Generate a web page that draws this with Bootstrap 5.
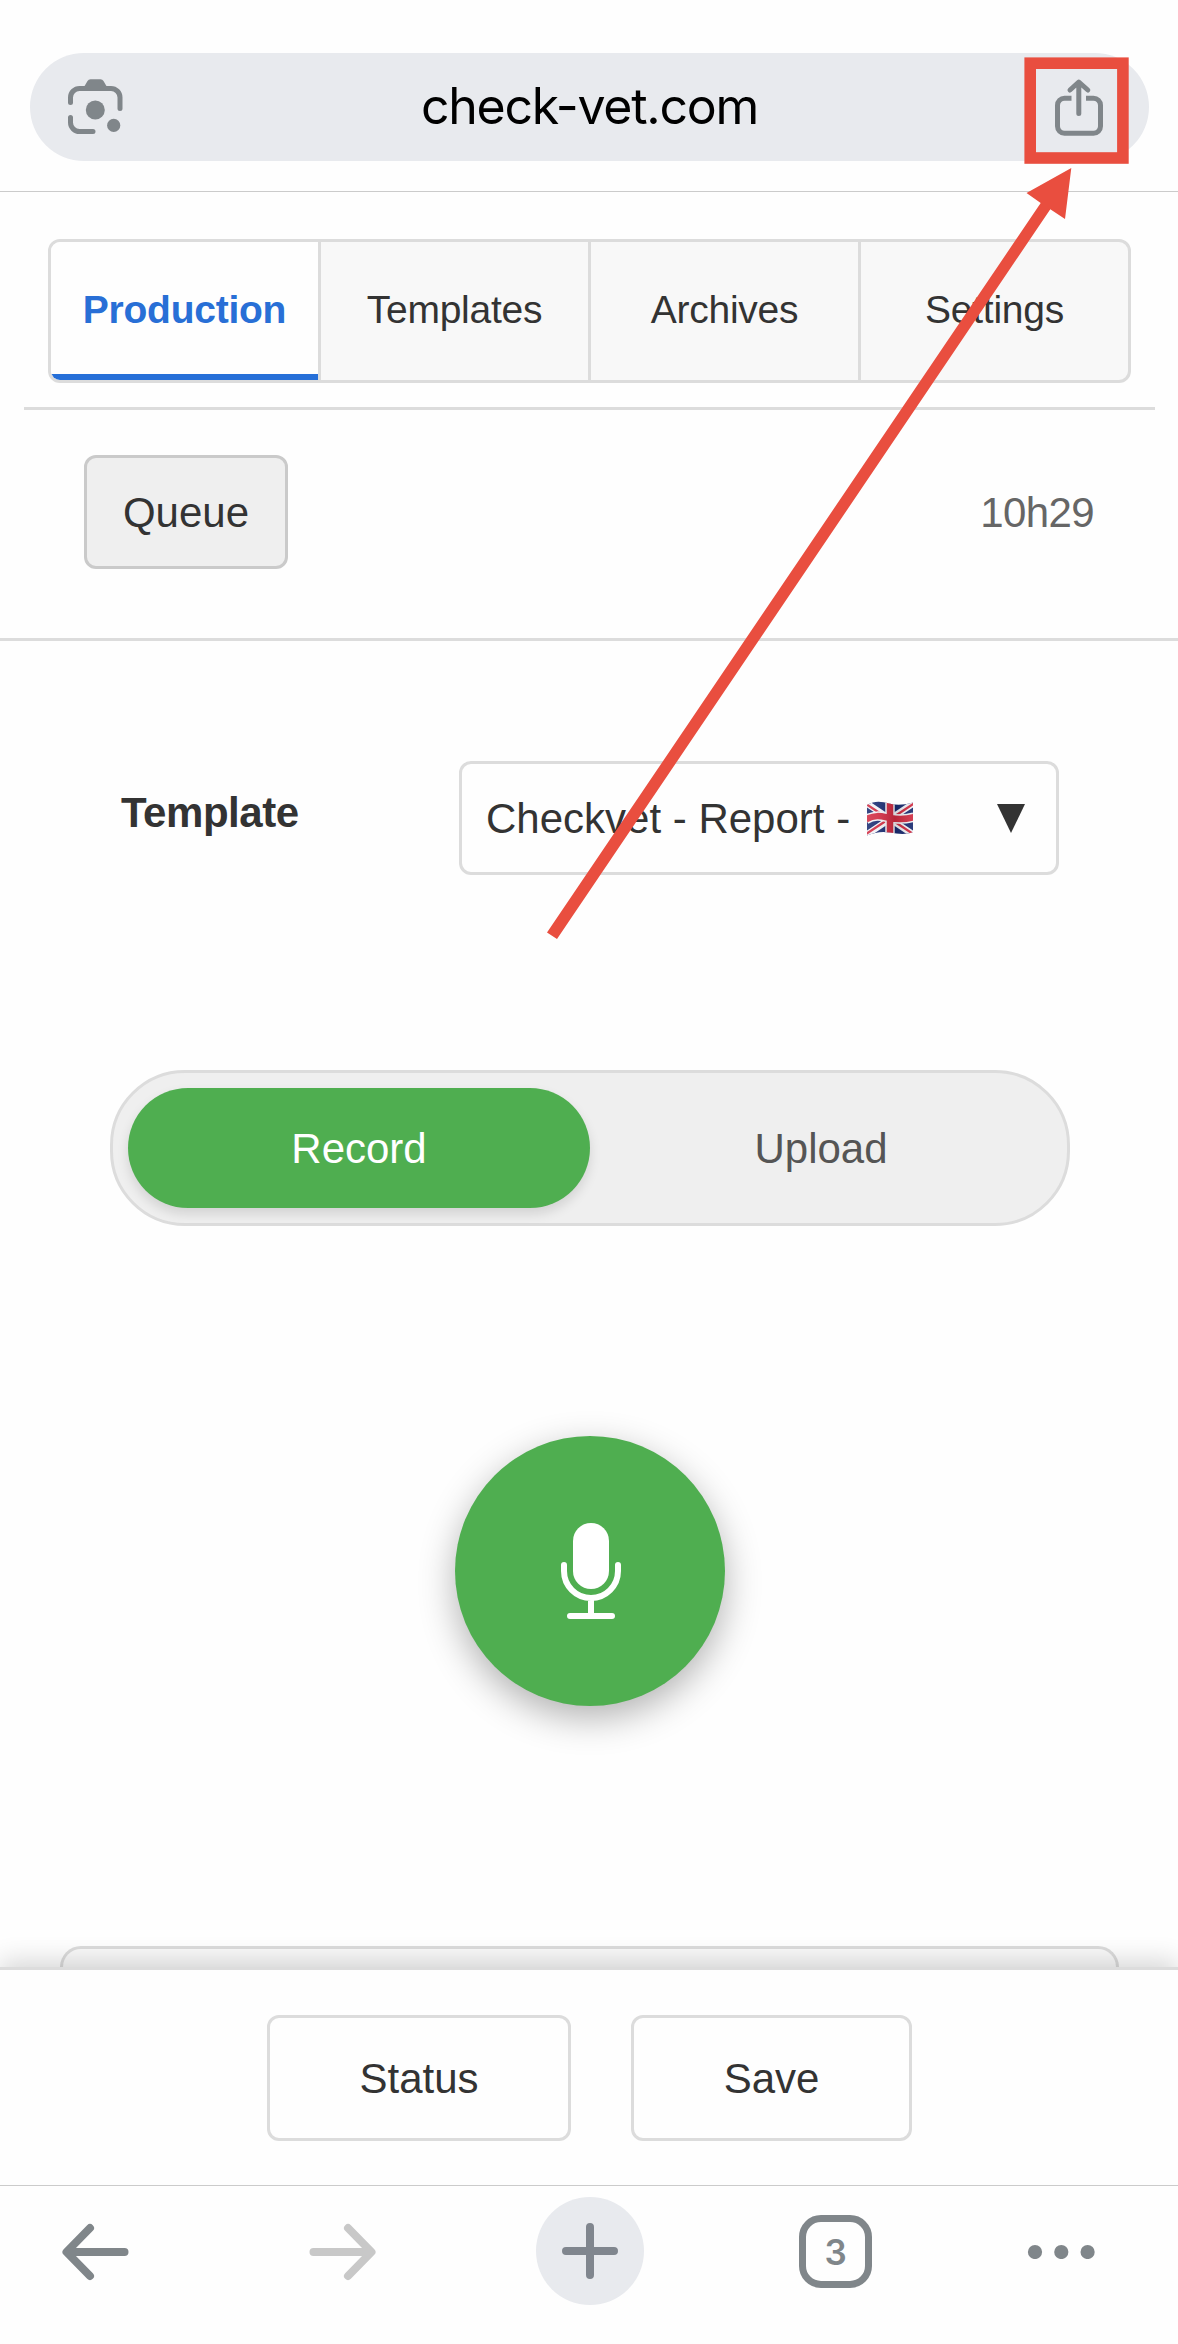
<!DOCTYPE html>
<html lang="en">
<head>
<meta charset="utf-8">
<meta name="viewport" content="width=device-width, initial-scale=1">
<title>check-vet.com</title>
<link href="https://cdn.jsdelivr.net/npm/bootstrap@5.3.0/dist/css/bootstrap.min.css" rel="stylesheet">
<style>
  :root { --line: #dcdcdc; --hair: #cbcbcb; --green: #4fae50; --ink: #333; --chrome: #80868a; --pill: #e8eaee; }
  body { font-family: "Liberation Sans", Arial, sans-serif; font-size: 42px; line-height: 48px; letter-spacing: -.25px; color: var(--ink); background: #fefefe; }
  svg { display: block; flex: none; }
  .screen { width: 1178px; height: 2344px; }
  .address-area { height: 192px; padding: 53px 29px 0 30px; border-bottom: 1px solid var(--hair); }
  .address-pill { height: 108px; padding: 0 43px 0 35px; background: var(--pill); }
  .address-text { font: 400 50px/60px Inter, sans-serif; color: #000; letter-spacing: -1.25px; padding-bottom: 3px; }
  .tab-area { height: 218px; margin: 0 23px 0 24px; padding: 47px 24px 0; border-bottom: 3px solid var(--line); }
  .main-tabs { height: 144px; border: 3px solid var(--line); border-radius: 12px; overflow: hidden; background: #f8f8f8; }
  .main-tabs .nav-link { flex: 1 1 0; padding: 0 0 3px; border-radius: 0; border-right: 3px solid var(--line); color: var(--ink); font-size: 39px; }
  .main-tabs .nav-link:last-child { border-right: 0; }
  .main-tabs .nav-link.active { background: #fefefe; color: #286fd6; font-weight: 700; box-shadow: inset 0 -6px #266fd8; }
  .queue-area { height: 231px; padding: 45px 84px 0; border-bottom: 3px solid var(--line); }
  .btn-queue { width: 204px; height: 114px; padding: 0; border: 3px solid #cacaca; border-radius: 12px; background: #efefef; color: var(--ink); font-size: 42px; }
  .clock { height: 114px; padding-top: 2px; color: #666; letter-spacing: -.6px; }
  .template-area { height: 429px; padding: 120px 119px 0 120px; }
  .template-select { width: 600px; height: 114px; padding: 2px 31px 0 24px; border: 3px solid var(--line); border-radius: 12px; letter-spacing: 0; }
  .template-label { height: 104px; padding-left: 1px; letter-spacing: -.45px; }
  .mode-switch { width: 960px; height: 156px; margin-left: 110px; padding: 15px; border: 3px solid var(--line); border-radius: 75px; background: #efefef; }
  .mode-switch .btn { flex: 1 1 0; border: 0; border-radius: 60px; font-size: 42px; color: #555; }
  .mode-switch .btn.active { background: var(--green); color: #fff; box-shadow: 0 6px 12px rgba(0,0,0,.12); }
  .mic-area { height: 720px; padding-top: 210px; padding-left: 2px; }
  .btn-mic { width: 270px; height: 270px; padding: 1px 0 0; border: 0; background: var(--green); box-shadow: 0 12px 36px rgba(0,0,0,.3); }
  .next-panel { height: 21px; margin: 0 59px 0 60px; border: 3px solid var(--line); border-bottom: 0; border-radius: 24px 24px 0 0; background: #fafafa; }
  .action-bar { height: 218px; padding: 45px 0 0 1px; gap: 60px; border-top: 3px solid var(--line); background: #fefefe; box-shadow: 0 -6px 24px rgba(0,0,0,.16); }
  .action-bar .btn { width: 304px; height: 126px; padding: 0; border: 3px solid var(--line); border-radius: 12px; color: var(--ink); font-size: 42px; background: #fefefe; }
  .action-bar .btn.save { width: 281px; }
  .browser-bar { height: 159px; padding: 11px 0 0 61px; border-top: 1px solid var(--hair); background: #fefefe; }
  .bar-item { height: 108px; }
  .gap-forward { margin-left: 180px; }
  .gap-new { margin-left: 159px; }
  .gap-end { margin-left: 155px; }
  .new-tab { width: 108px; height: 108px; background: var(--pill); }
  .tab-count { width: 73px; height: 73px; border: 7px solid var(--chrome); border-radius: 22px; color: var(--chrome); font: 600 35px/40px Inter, sans-serif; padding-top: 2px; }
  .callout-layer { z-index: 5; pointer-events: none; }
</style>
<script src="https://cdn.jsdelivr.net/npm/bootstrap@5.3.0/dist/js/bootstrap.bundle.min.js"></script>
</head>
<body>
<div class="screen position-relative overflow-hidden">
  <header class="address-area">
    <div class="address-pill rounded-pill d-flex align-items-center justify-content-between">
      <svg width="62" height="62" viewBox="65 76 62 62" fill="none" stroke="#80868a" stroke-width="5" stroke-linecap="round" aria-label="Lens">
        <path d="M70.5 102.500V97.500a9 9 0 0 1 9-9h31.500a9 9 0 0 1 9 9V108.500M70.500 117.500v5a9 9 0 0 0 9 9H93"/>
        <path d="M84 87l3.500-6q1-1.700 3-1.700h10q2 0 3 1.700l3.500 6z" fill="#80868a" stroke="none"/>
        <circle cx="95.300" cy="110" r="9.500" fill="#80868a" stroke="none"/><circle cx="113.700" cy="125.400" r="6.600" fill="#80868a" stroke="none"/>
      </svg>
      <span class="address-text">check-vet.com</span>
      <svg width="54" height="62" viewBox="1052 76 54 62" fill="none" stroke="#80868a" stroke-width="5" aria-label="Share">
        <path d="M1071.500 98.300h-7a7 7 0 0 0-7 7v21a7 7 0 0 0 7 7h29a7 7 0 0 0 7-7v-21a7 7 0 0 0-7-7h-7.500"/>
        <path d="M1078.800 113.500V82.500M1070 90l8.800-8 9 8" stroke-linecap="round" stroke-linejoin="round"/>
      </svg>
    </div>
  </header>

  <div class="tab-area">
    <nav class="main-tabs nav flex-nowrap">
      <a class="nav-link active d-flex align-items-center justify-content-center" href="#">Production</a>
      <a class="nav-link d-flex align-items-center justify-content-center" href="#">Templates</a>
      <a class="nav-link d-flex align-items-center justify-content-center" href="#">Archives</a>
      <a class="nav-link d-flex align-items-center justify-content-center" href="#">Settings</a>
    </nav>
  </div>

  <section class="queue-area d-flex justify-content-between align-items-start">
    <button class="btn btn-queue" type="button">Queue</button>
    <div class="clock d-flex align-items-center">10h29</div>
  </section>

  <main>
    <section class="template-area d-flex justify-content-between align-items-start">
      <label class="template-label fw-bold d-flex align-items-center">Template</label>
      <div class="template-select d-flex align-items-center" role="combobox">
        <span>Checkvet - Report -</span>
        <svg class="ms-3" width="48" height="36" viewBox="0 0 48 36" aria-label="United Kingdom">
          <defs><clipPath id="wave"><path d="M1 4C9-.5 15 .5 23 2.500S38 4 47 1.500V31c-8 3-14 2-23 .500S9 31.500 1 34.500z"/></clipPath>
          <linearGradient id="shine"><stop offset="0" stop-color="#fff" stop-opacity=".15"/><stop offset=".25" stop-color="#fff" stop-opacity=".1"/><stop offset=".6" stop-color="#000" stop-opacity=".12"/><stop offset="1" stop-color="#fff" stop-opacity=".1"/></linearGradient></defs>
          <g clip-path="url(#wave)">
            <path fill="#172a70" d="M0 0h48v36H0z"/>
            <path d="M0 2l48 32M0 34L48 2" stroke="#f2f2f6" stroke-width="6.500"/>
            <path d="M0 3l22 14.500M26 19l22 14.500M0 33l22-14.500M26 17L48 2.500" stroke="#d02a40" stroke-width="2.300"/>
            <path d="M24 0v36M0 18.500C10 13 16 15.500 24 17s14 2 24-1" stroke="#f2f2f6" stroke-width="9.500" fill="none"/>
            <path d="M24 0v36M0 18.500C10 13 16 15.500 24 17s14 2 24-1" stroke="#d02a40" stroke-width="6.500" fill="none"/>
            <path fill="url(#shine)" d="M0 0h48v36H0z"/>
          </g>
        </svg>
        <svg class="ms-auto" width="28" height="30" viewBox="0 0 28 30" fill="#333"><path d="M0 0h28L14 29z"/></svg>
      </div>
    </section>

    <div class="mode-switch d-flex">
      <button class="btn active" type="button">Record</button>
      <button class="btn" type="button">Upload</button>
    </div>

    <div class="mic-area d-flex justify-content-center align-items-start">
      <button class="btn btn-mic rounded-circle d-flex align-items-center justify-content-center" type="button" aria-label="Start recording">
        <svg width="66" height="100" viewBox="557 1520 66 100" fill="none" stroke="#fff" stroke-width="6" stroke-linecap="round">
          <rect x="573" y="1521" width="36" height="66" rx="18" fill="#fff" stroke="none"/>
          <path d="M564 1563v6a27 27 0 0 0 54 0v-6M591 1597v17M570 1614h42"/>
        </svg>
      </button>
    </div>
    <div class="next-panel"></div>
  </main>

  <div class="action-bar position-relative d-flex justify-content-center align-items-start">
    <button class="btn" type="button">Status</button>
    <button class="btn save" type="button">Save</button>
  </div>

  <footer class="browser-bar position-relative d-flex align-items-start">
    <div class="bar-item d-flex align-items-center"><svg width="68" height="60" fill="none" stroke="#80868a" stroke-width="8" stroke-linecap="round" stroke-linejoin="round"><path d="M63.500 31H7M29 7L5.500 31 29 55"/></svg></div>
    <div class="bar-item gap-forward d-flex align-items-center"><svg width="68" height="60" fill="none" stroke="#c8c8c8" stroke-width="8" stroke-linecap="round" stroke-linejoin="round"><path d="M4.500 31H61M39 7L62.500 31 39 55"/></svg></div>
    <div class="new-tab gap-new rounded-circle d-flex align-items-center justify-content-center"><svg width="56" height="56" fill="none" stroke="#80868e" stroke-width="8" stroke-linecap="round"><path d="M28 4v48M4 28h48"/></svg></div>
    <div class="bar-item gap-end d-flex align-items-center"><div class="tab-count d-flex align-items-center justify-content-center">3</div></div>
    <div class="bar-item gap-end d-flex align-items-center"><svg width="68" height="16" fill="#80868a"><circle cx="8" cy="9" r="7.100"/><circle cx="34.300" cy="9" r="7.100"/><circle cx="60.600" cy="9" r="7.100"/></svg></div>
  </footer>

  <!-- red callout drawn over the page, pointing at the share button -->
  <svg class="callout-layer position-absolute top-0 start-0" width="1178" height="2344">
    <rect x="1030.200" y="63.200" width="92.700" height="94.800" fill="none" stroke="#e94e3f" stroke-width="11.600"/>
    <path fill="#e94e3f" d="M1071.300 168L1026.500 193 1040.700 203 547 932.500 557 939 1050.300 209.300 1065 219z"/>
  </svg>
</div>
</body>
</html>
